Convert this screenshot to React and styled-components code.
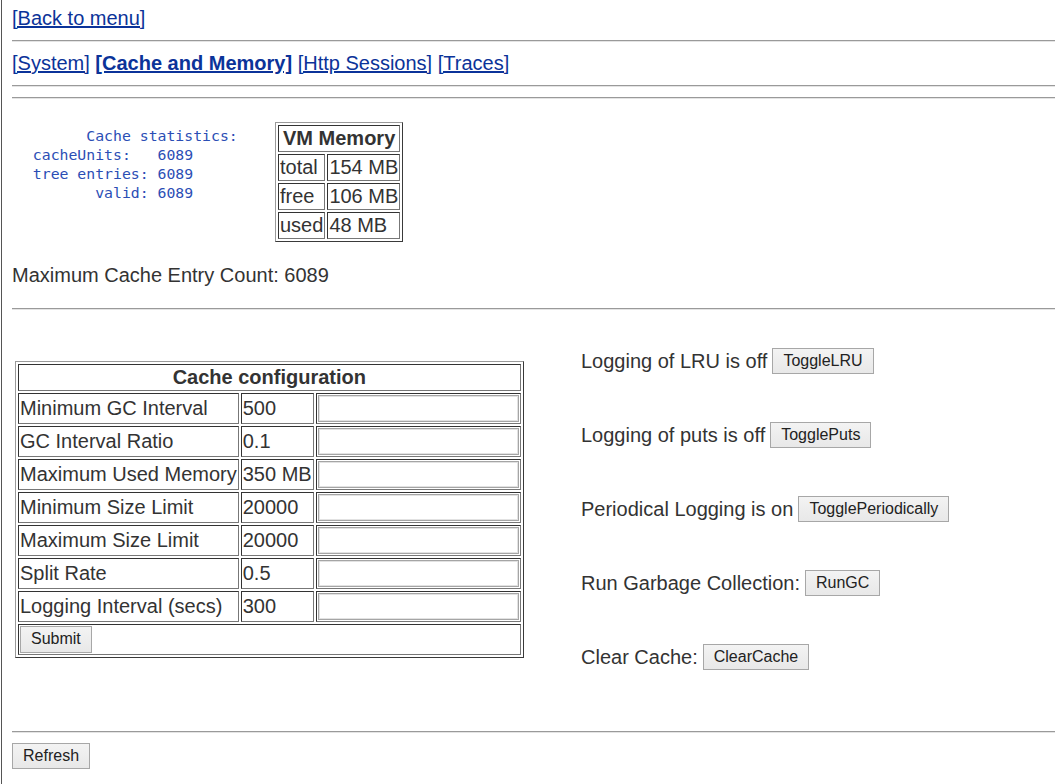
import React from "react";
import styled, { createGlobalStyle } from "styled-components";

const GlobalStyle = createGlobalStyle`
  html, body { margin: 0; padding: 0; background: #fff; }
  body {
    font-family: "Liberation Sans", Arial, sans-serif;
    font-size: 20px;
    color: #333;
  }
`;

const Page = styled.div`
  margin-left: 1px;
  border-left: 1px solid #555;
  padding: 7px 0 0 10px;
  min-height: 784px;
  box-sizing: border-box;
`;

const LinkLine = styled.div`
  line-height: 23px;
`;

const NavLink = styled.a`
  color: #0b3399;
  text-decoration: underline;
  font-weight: ${(p) => (p.$active ? 700 : 400)};
  cursor: pointer;
`;

const Rule = styled.hr`
  border: 0;
  height: 2px;
  margin: ${(p) => p.$top ?? 10}px 0 ${(p) => p.$bottom ?? 10}px;
  background: linear-gradient(#9a9a9a 0 1px, #e4e4e4 1px 2px);
`;

const StatsRow = styled.div`
  display: flex;
  align-items: flex-start;
  margin-top: 23px;
  padding-left: 3px;
`;

const Stats = styled.pre`
  margin: 4px 0 0;
  width: 260px;
  font-family: "DejaVu Sans Mono", "Liberation Mono", monospace;
  font-size: 14.8px;
  line-height: 19px;
  color: #2b4eb5;
`;

const Table = styled.table`
  justify-self: start;
  border-collapse: separate;
  border-spacing: 2px;
  border: 1px solid;
  border-color: #9a9a9a #3a3a3a #3a3a3a #9a9a9a;
  font-size: 20px;
  color: #333;
`;

const Cell = styled.td`
  padding: 1px;
  border: 1px solid;
  border-color: #333 #777 #777 #333;
  line-height: 23px;
  white-space: nowrap;
  text-align: ${(p) => p.$align || "left"};
  font-weight: ${(p) => (p.$bold ? 700 : 400)};
  vertical-align: middle;
`;

const Para = styled.p`
  margin: 22px 0 21px;
  line-height: 23px;
`;

const ControlGrid = styled.div`
  display: grid;
  grid-template-columns: 566px 1fr;
  align-items: center;
  padding-left: 3px;
  margin-top: 38px;
`;

const TextInput = styled.input`
  display: block;
  box-sizing: border-box;
  width: 201px;
  height: 27px;
  margin: 0;
  padding: 0 2px;
  border: 1px solid #a5a5a5;
  box-shadow: inset 0 0 0 1px #e2e2e2;
  background: #fff;
  font-family: "Liberation Sans", Arial, sans-serif;
  font-size: 16px;
`;

const Button = styled.button`
  box-sizing: border-box;
  height: ${(p) => p.$h || 26}px;
  margin: 0;
  padding: 0 10px;
  border: 1px solid #a7a7a7;
  border-radius: 0;
  background: linear-gradient(#f3f3f3, #e8e8e8);
  font-family: "Liberation Sans", Arial, sans-serif;
  font-size: 16px;
  color: #222;
  cursor: pointer;
`;

const Actions = styled.div`
  display: flex;
  flex-direction: column;
  gap: 48px;
`;

const ActionRow = styled.div`
  display: flex;
  align-items: center;
  gap: 5px;
  line-height: 23px;
  white-space: nowrap;
`;

const RefreshBar = styled.div`
  margin-top: 0;
`;

const configRows = [
  ["Minimum GC Interval", "500"],
  ["GC Interval Ratio", "0.1"],
  ["Maximum Used Memory", "350 MB"],
  ["Minimum Size Limit", "20000"],
  ["Maximum Size Limit", "20000"],
  ["Split Rate", "0.5"],
  ["Logging Interval (secs)", "300"],
];

const actions = [
  ["Logging of LRU is off", "ToggleLRU"],
  ["Logging of puts is off", "TogglePuts"],
  ["Periodical Logging is on", "TogglePeriodically"],
  ["Run Garbage Collection:", "RunGC"],
  ["Clear Cache:", "ClearCache"],
];

const statsText = `        Cache statistics:
  cacheUnits:   6089
  tree entries: 6089
         valid: 6089`;

export default function App() {
  return (
    <>
      <GlobalStyle />
      <Page>
        <LinkLine>
          <NavLink>[Back to menu]</NavLink>
        </LinkLine>
        <Rule />
        <LinkLine>
          <NavLink>[System]</NavLink> <NavLink $active>[Cache and Memory]</NavLink>{" "}
          <NavLink>[Http Sessions]</NavLink> <NavLink>[Traces]</NavLink>
        </LinkLine>
        <Rule />
        <Rule />
        <StatsRow>
          <Stats>{statsText}</Stats>
          <Table>
            <tbody>
              <tr>
                <Cell colSpan={2} $align="center" $bold>
                  VM Memory
                </Cell>
              </tr>
              <tr>
                <Cell>total</Cell>
                <Cell>154 MB</Cell>
              </tr>
              <tr>
                <Cell>free</Cell>
                <Cell>106 MB</Cell>
              </tr>
              <tr>
                <Cell>used</Cell>
                <Cell>48 MB</Cell>
              </tr>
            </tbody>
          </Table>
        </StatsRow>
        <Para>Maximum Cache Entry Count: 6089</Para>
        <Rule $top={0} />
        <ControlGrid>
          <Table>
            <tbody>
              <tr>
                <Cell colSpan={3} $align="center" $bold>
                  Cache configuration
                </Cell>
              </tr>
              {configRows.map(([label, value]) => (
                <tr key={label}>
                  <Cell>{label}</Cell>
                  <Cell>{value}</Cell>
                  <Cell>
                    <TextInput type="text" />
                  </Cell>
                </tr>
              ))}
              <tr>
                <Cell colSpan={3}>
                  <Button $h={27}>Submit</Button>
                </Cell>
              </tr>
            </tbody>
          </Table>
          <Actions>
            {actions.map(([label, btn]) => (
              <ActionRow key={btn}>
                <span>{label}</span>
                <Button>{btn}</Button>
              </ActionRow>
            ))}
          </Actions>
        </ControlGrid>
        <Rule $top={61} />
        <RefreshBar>
          <Button>Refresh</Button>
        </RefreshBar>
      </Page>
    </>
  );
}
